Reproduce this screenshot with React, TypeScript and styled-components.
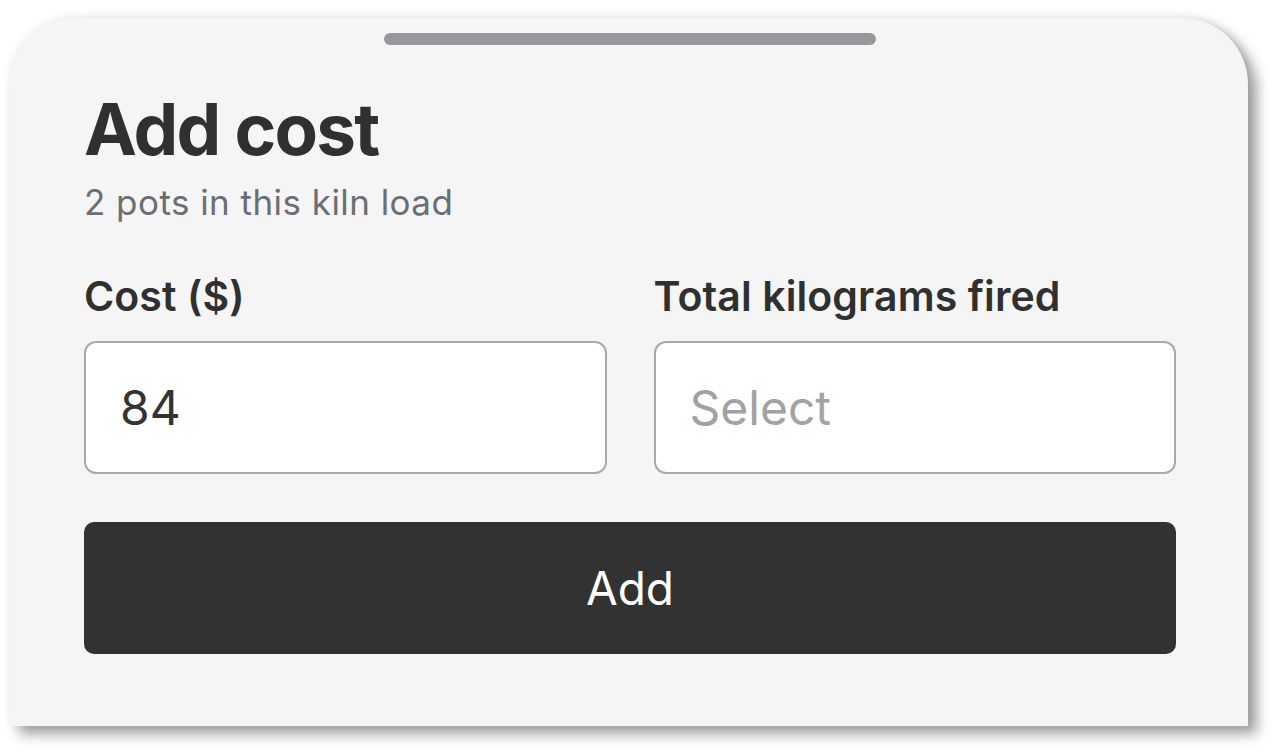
import React from 'react';
import styled, { createGlobalStyle } from 'styled-components';

const GlobalStyle = createGlobalStyle`
  html, body {
    margin: 0;
    padding: 0;
    background: #ffffff;
    font-family: Inter, "Noto Sans", sans-serif;
  }
  * {
    box-sizing: border-box;
  }
`;

const Page = styled.div`
  width: 1284px;
  height: 756px;
  padding: 18px 0 0 10px;
  overflow: hidden;
`;

const Sheet = styled.div`
  width: 1238px;
  height: 708px;
  background: #f5f5f5;
  border-radius: 66px 66px 0 0;
  box-shadow: 9px 8px 13px rgba(0, 0, 0, 0.38), 0 -2px 8px rgba(0, 0, 0, 0.07);
  padding: 15px 72px 0 74px;
  display: flex;
  flex-direction: column;
`;

const Handle = styled.div`
  align-self: center;
  width: 492px;
  height: 12px;
  border-radius: 6px;
  background: #98989c;
`;

const Title = styled.h1`
  margin: 49px 0 0;
  font-size: 71px;
  line-height: 1;
  font-weight: 700;
  color: #303030;
  letter-spacing: -1.8px;
`;

const Subtitle = styled.p`
  margin: 20px 0 0;
  font-size: 35px;
  line-height: 1;
  color: #6b6e75;
  letter-spacing: 0.45px;
`;

const Fields = styled.div`
  margin-top: 56px;
  display: grid;
  grid-template-columns: 1fr 1fr;
  column-gap: 47px;
`;

const Field = styled.label`
  display: flex;
  flex-direction: column;
  gap: 24px;
`;

const Label = styled.span`
  font-size: 41px;
  line-height: 1;
  font-weight: 600;
  color: #303030;
  letter-spacing: 0.1px;
`;

const Input = styled.input`
  width: 100%;
  height: 133px;
  border: 2.5px solid #a9a9ab;
  border-radius: 12px;
  background: #ffffff;
  padding: 0 34px;
  font-family: inherit;
  font-size: 48px;
  color: #333333;
  outline: none;

  &::placeholder {
    color: #a2a2a4;
  }
`;

const Button = styled.button`
  margin-top: 48px;
  height: 132px;
  width: 100%;
  border: none;
  border-radius: 10px;
  background: #323232;
  color: #ffffff;
  font-family: inherit;
  font-size: 46px;
  font-weight: 400;
  cursor: pointer;
`;

const App: React.FC = () => {
  return (
    <>
      <GlobalStyle />
      <Page>
        <Sheet>
          <Handle />
          <Title>Add cost</Title>
          <Subtitle>2 pots in this kiln load</Subtitle>
          <Fields>
            <Field>
              <Label>Cost ($)</Label>
              <Input defaultValue="84" />
            </Field>
            <Field>
              <Label>Total kilograms fired</Label>
              <Input placeholder="Select" />
            </Field>
          </Fields>
          <Button>Add</Button>
        </Sheet>
      </Page>
    </>
  );
};

export default App;
